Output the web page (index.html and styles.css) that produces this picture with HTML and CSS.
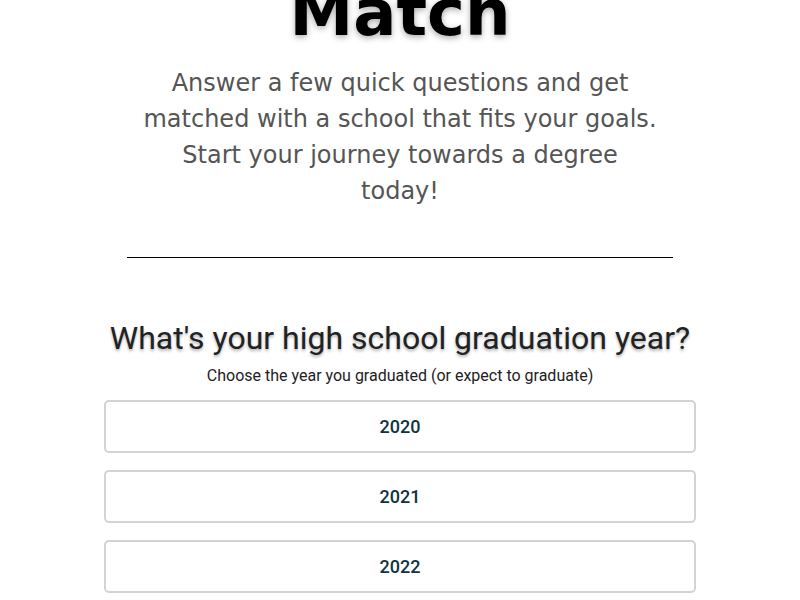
FILE: index.html
```html
<!DOCTYPE html>
<html lang="en">
<head>
  <meta charset="UTF-8">
  <title>School Match</title>
  <link rel="stylesheet" href="styles.css">
</head>
<body>
  <div class="page">

    <!-- Hero -->
    <div class="hero">
      <h1 class="hero-title">Match</h1>
      <p class="hero-text">Answer a few quick questions and get matched with a school that fits your goals. Start your journey towards a degree today!</p>
    </div>

    <hr class="divider">

    <!-- Question -->
    <div class="question">
      <h2 class="question-title">What's your high school graduation year?</h2>
      <p class="question-sub">Choose the year you graduated (or expect to graduate)</p>
      <div class="options">
        <button class="option-btn">2020</button>
        <button class="option-btn">2021</button>
        <button class="option-btn">2022</button>
        <button class="option-btn">2023</button>
      </div>
    </div>

  </div>
</body>
</html>
```

FILE: styles.css
```css
* {
  box-sizing: border-box;
}

body {
  font-family: "DejaVu Sans", sans-serif;
  background-color: #fff;
  color: #222;
  margin: 0;
  padding: 0;
  overflow: hidden;
}

.page {
  max-width: 600px;
  margin: 0 auto;
}

.hero {
  margin-top: -27px;
  text-align: center;
}

.hero-title {
  margin: 0;
  font-size: 64px;
  line-height: 80px;
  font-weight: bold;
  color: #000;
  text-shadow: 0 2px 6px rgba(0, 0, 0, 0.35);
}

.hero-text {
  max-width: 520px;
  margin: 12px auto 0;
  font-size: 24px;
  line-height: 36px;
  color: #555;
}

.divider {
  width: 546px;
  margin: 48px auto 0;
  border: none;
  border-top: 1px solid #000;
}

.question {
  margin-top: 60px;
  text-align: center;
  font-family: Roboto, sans-serif;
}

.question-title {
  margin: 0;
  font-size: 32px;
  line-height: 40px;
  font-weight: normal;
  color: #222;
  text-shadow: 0 2px 3px rgba(0, 0, 0, 0.3);
}

.question-sub {
  margin: 8px 0 0;
  font-size: 16px;
  line-height: 20px;
  color: #222;
}

.options {
  display: flex;
  flex-direction: column;
  gap: 17px;
  width: 592px;
  margin: 14px auto 0;
}

.option-btn {
  height: 53px;
  background-color: #fff;
  border: 2px solid #d3d3d3;
  border-radius: 5px;
  font-family: Roboto, sans-serif;
  font-size: 18px;
  font-weight: 500;
  color: #0f3342;
  cursor: pointer;
}
```
